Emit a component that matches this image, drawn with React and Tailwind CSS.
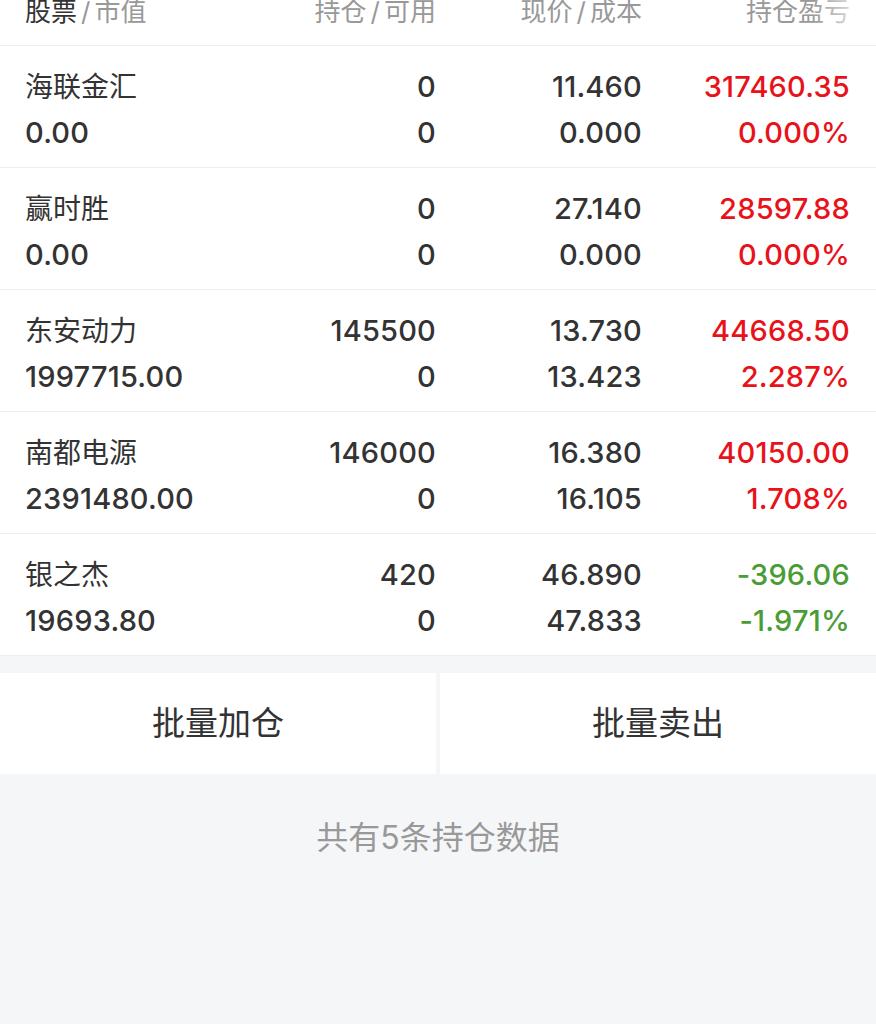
import React from "react";

const rows = [
  { name: "海联金汇", value: "0.00", hold: "0", avail: "0", price: "11.460", cost: "0.000", pl: "317460.35", pct: "0.000%", up: true },
  { name: "赢时胜", value: "0.00", hold: "0", avail: "0", price: "27.140", cost: "0.000", pl: "28597.88", pct: "0.000%", up: true },
  { name: "东安动力", value: "1997715.00", hold: "145500", avail: "0", price: "13.730", cost: "13.423", pl: "44668.50", pct: "2.287%", up: true },
  { name: "南都电源", value: "2391480.00", hold: "146000", avail: "0", price: "16.380", cost: "16.105", pl: "40150.00", pct: "1.708%", up: true },
  { name: "银之杰", value: "19693.80", hold: "420", avail: "0", price: "46.890", cost: "47.833", pl: "-396.06", pct: "-1.971%", up: false },
];

const cols = "grid grid-cols-[200px_211px_206px_208px] pl-[25px]";
const num = "text-[29px] font-medium leading-[46px] tracking-[0.2px]";

function Slash() {
  return <span className="mx-[4px]">/</span>;
}

function PositionRow({ r }) {
  const plColor = r.up ? "text-[#e8121a]" : "text-[#4a9c34]";
  return (
    <div className={`${cols} pt-[18px] pb-[11px] border-b border-[#efefef] bg-white`}>
      <div className="flex flex-col">
        <span className="text-[28px] leading-[46px]">{r.name}</span>
        <span className={num}>{r.value}</span>
      </div>
      <div className="flex flex-col items-end">
        <span className={num}>{r.hold}</span>
        <span className={num}>{r.avail}</span>
      </div>
      <div className="flex flex-col items-end">
        <span className={num}>{r.price}</span>
        <span className={num}>{r.cost}</span>
      </div>
      <div className={`flex flex-col items-end ${plColor}`}>
        <span className={num}>{r.pl}</span>
        <span className={num}>{r.pct}</span>
      </div>
    </div>
  );
}

export default function App() {
  return (
    <div className="w-[876px] h-[1024px] overflow-hidden bg-[#f5f6f8] text-[#333] font-['Inter','Noto_Sans_CJK_SC',sans-serif]">
      {/* Header */}
      <div className={`${cols} relative h-[46px] overflow-hidden bg-white border-b border-[#efefef] text-[26px] leading-[24px] text-[#999]`}>
        <div>
          <span className="text-[#333]">股票</span><Slash />市值
        </div>
        <div className="text-right">持仓<Slash />可用</div>
        <div className="text-right">现价<Slash />成本</div>
        <div className="text-right">持仓盈亏</div>
        <div className="absolute top-0 right-0 h-full w-[64px] bg-gradient-to-r from-white/0 to-white" />
      </div>

      {rows.map((r) => (
        <PositionRow key={r.name} r={r} />
      ))}

      {/* Batch actions */}
      <div className="mt-[17px] grid grid-cols-[436px_436px] gap-[4px]">
        <button className="h-[101px] bg-white text-[33px] text-[#333]">批量加仓</button>
        <button className="h-[101px] bg-white text-[33px] text-[#333]">批量卖出</button>
      </div>

      <p className="mt-[48px] text-center text-[32px] leading-[32px] text-[#999]">共有5条持仓数据</p>
    </div>
  );
}
